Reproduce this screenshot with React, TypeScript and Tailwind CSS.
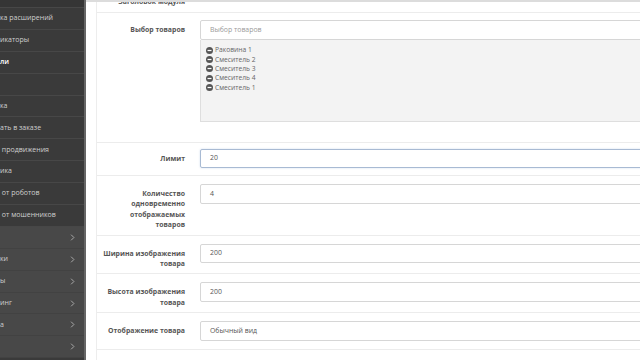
import React from 'react';

const subItems = [
  { text: 'ка расширений' },
  { text: 'икаторы' },
  { text: 'ли', active: true },
  { text: '' },
  { text: 'ка' },
  { text: 'ать в заказе' },
  { text: ' продвижения' },
  { text: 'ика' },
  { text: ' от роботов' },
  { text: ' от мошенников' },
];

const mainItems = ['', 'ки', 'ы', 'инг', 'а', ''];

const products = ['Раковина 1', 'Смеситель 2', 'Смеситель 3', 'Смеситель 4', 'Смеситель 1'];

function MinusCircle() {
  return (
    <svg width="7" height="7" viewBox="0 0 16 16" className="shrink-0">
      <circle cx="8" cy="8" r="8" fill="#555" />
      <rect x="3.5" y="6.6" width="9" height="2.8" fill="#fff" />
    </svg>
  );
}

function Chevron() {
  return (
    <svg width="5" height="7" viewBox="0 0 6 10" className="shrink-0">
      <path d="M1 1l4 4-4 4" fill="none" stroke="#aaa" strokeWidth="1.4" />
    </svg>
  );
}

function Row({ label, children, pad = 'pt-[7px] pb-[8px]' }: { label: React.ReactNode; children: React.ReactNode; pad?: string }) {
  return (
    <div className={`flex border-b border-[#ececec] ${pad}`}>
      <div className="w-[88px] shrink-0 text-right text-[6.9px] leading-[10.4px] font-bold text-[#555] pt-[5px]">{label}</div>
      <div className="ml-[15px] flex-1">{children}</div>
    </div>
  );
}

function Input({ value, placeholder, focus }: { value?: string; placeholder?: string; focus?: boolean }) {
  return (
    <div
      className={`h-[19.5px] w-[520px] flex items-center pl-[9px] text-[6.9px] rounded-[2px] border ${
        focus ? 'border-[#a8bad3] shadow-[0_0_2px_rgba(102,140,200,0.35)]' : 'border-[#d6d6d6]'
      } ${value ? 'text-[#555]' : 'text-[#9a9a9a]'}`}
    >
      {value ?? placeholder}
    </div>
  );
}

export default function App() {
  return (
    <div className="w-[640px] h-[360px] overflow-hidden flex bg-white font-['Open_Sans',sans-serif]">
      {/* Left menu */}
      <aside className="w-[86px] shrink-0 bg-[#3a3a3a] border-r-2 border-[#666] text-[7px] text-[#cfcfcf]">
        <div className="h-[8px] border-b border-[#474747] bg-[#353535]" />
        {subItems.map((it, i) => (
          <div
            key={i}
            className={`h-[21.9px] flex items-center border-b border-[#474747] whitespace-pre ${
              it.active ? 'text-white font-semibold' : ''
            }`}
          >
            {it.text}
          </div>
        ))}
        {mainItems.map((t, i) => (
          <div
            key={i}
            className="h-[21.9px] flex items-center justify-between pr-[9px] bg-[#484848] border-b border-[#424242] whitespace-pre"
          >
            <span>{t}</span>
            <Chevron />
          </div>
        ))}
      </aside>

      {/* Content */}
      <main className="flex-1 overflow-hidden pl-[10px] border-t-2 border-[#dcdcdc]">
        <div className="h-full border-l border-[#ededed]">
          <div className="h-[11px] overflow-hidden flex border-b border-[#ececec]">
            <div className="w-[88px] text-right text-[6.9px] leading-[10px] font-bold text-[#555] -mt-[5px]">Заголовок модуля</div>
          </div>

          <Row label="Выбор товаров" pad="pt-[7px] pb-[20px]">
            <Input placeholder="Выбор товаров" />
            <div className="w-[520px] h-[82px] bg-[#f3f3f3] border border-t-0 border-[#dedede] pt-[6px] pl-[5px]">
              {products.map((p, i) => (
                <div key={i} className="flex items-center gap-[2px] h-[9.4px] text-[6.7px] text-[#666]">
                  <MinusCircle />
                  <span>{p}</span>
                </div>
              ))}
            </div>
          </Row>

          <Row label="Лимит" pad="pt-[6px] pb-[7px]">
            <Input value="20" focus />
          </Row>

          <Row label={<>Количество<br />одновременно<br />отображаемых<br />товаров</>} pad="pt-[8px] pb-[4px]">
            <Input value="4" />
          </Row>

          <Row label={<>Ширина изображения<br />товара</>} pad="pt-[8px] pb-[4px]">
            <Input value="200" />
          </Row>

          <Row label={<>Высота изображения<br />товара</>} pad="pt-[8px] pb-[4px]">
            <Input value="200" />
          </Row>

          <Row label="Отображение товара" pad="pt-[8px] pb-[8px]">
            <Input value="Обычный вид" />
          </Row>
        </div>
      </main>
    </div>
  );
}
